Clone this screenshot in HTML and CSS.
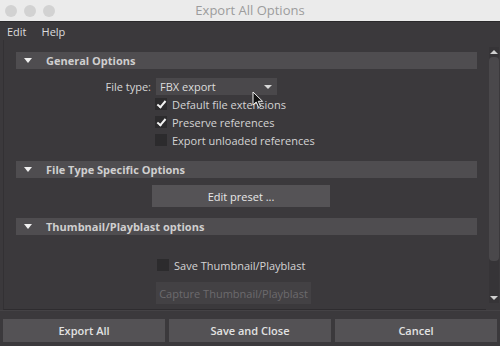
FILE: index.html
```html
<!DOCTYPE html>
<html>
	<head>
		<meta charset="UTF-8">
		<title>Export All Options</title>
		<link rel="stylesheet" href="styles.css">
	</head>
	<body>
		<div class="window">
			<div class="titlebar">
				<div class="lights"><span></span><span></span><span></span></div>
				<div class="title">Export All Options</div>
			</div>
			<div class="menubar">
				<span>Edit</span>
				<span>Help</span>
			</div>
			<div class="main">
				<div class="panel">
					<div class="section">
						<div class="head"><i class="tri"></i>General Options</div>
						<div class="body general">
							<div class="row">
								<label class="lbl">File type:</label>
								<div class="select">FBX export<i class="arrow"></i></div>
							</div>
							<div class="check"><span class="box on"></span>Default file extensions</div>
							<div class="check"><span class="box on"></span>Preserve references</div>
							<div class="check"><span class="box"></span>Export unloaded references</div>
						</div>
					</div>
					<div class="section">
						<div class="head"><i class="tri"></i>File Type Specific Options</div>
						<div class="body specific">
							<button class="btn preset">Edit preset ...</button>
						</div>
					</div>
					<div class="section">
						<div class="head"><i class="tri"></i>Thumbnail/Playblast options</div>
						<div class="body thumb">
							<div class="check"><span class="box"></span>Save Thumbnail/Playblast</div>
							<button class="btn capture" disabled>Capture Thumbnail/Playblast</button>
						</div>
					</div>
				</div>
				<div class="scroll">
					<i class="up"></i>
					<div class="track"><div class="thumbbar"></div></div>
					<i class="down"></i>
				</div>
			</div>
			<div class="footer">
				<button class="fbtn">Export All</button>
				<button class="fbtn">Save and Close</button>
				<button class="fbtn">Cancel</button>
			</div>
			<svg class="cursor" width="12" height="18" viewBox="0 0 12 18">
				<path d="M1 1 L1 14 L4.2 11 L6.6 16.5 L8.6 15.6 L6.3 10.3 L10.6 10.3 Z" fill="#111" stroke="#eee" stroke-width="1"/>
			</svg>
		</div>
	</body>
</html>
```
FILE: styles.css
```css
body {
	margin: 0;
	background: #3b393c;
	font-family: "Open Sans", "DejaVu Sans", sans-serif;
	font-size: 11px;
	color: #d6d6d6;
}

.window {
	width: 500px;
	height: 346px;
	position: relative;
	overflow: hidden;
	display: flex;
	flex-direction: column;
}

.titlebar {
	height: 21px;
	background: #ebebeb;
	border-bottom: 1px solid #2a292b;
	display: flex;
	align-items: center;
	position: relative;
	flex-shrink: 0;
}

.lights {
	display: flex;
	gap: 7px;
	padding-left: 5px;
}

.lights span {
	width: 12px;
	height: 12px;
	border-radius: 50%;
	background: #d2d2d2;
}

.title {
	position: absolute;
	left: 0;
	right: 0;
	text-align: center;
	color: #9c9c9c;
	font-size: 13px;
	line-height: 21px;
}

.menubar {
	height: 18px;
	display: flex;
	gap: 15px;
	padding-left: 7px;
	align-items: center;
	color: #dcdcdc;
	flex-shrink: 0;
}

.main {
	display: flex;
	height: 270px;
	flex-shrink: 0;
}

.panel {
	flex: 1;
	margin-left: 3px;
	border-left: 1px solid #333134;
	border-bottom: 1px solid #2e2c2f;
	padding: 12px 9px 0 12px;
}

.head {
	height: 17px;
	background: #4f4d50;
	font-weight: bold;
	color: #cfcfcf;
	display: flex;
	align-items: center;
	padding-left: 8px;
}

.tri {
	width: 0;
	height: 0;
	border-left: 4px solid transparent;
	border-right: 4px solid transparent;
	border-top: 5px solid #f0f0f0;
	margin-right: 14px;
}

.body.general {
	padding: 8px 0 12px;
}

.row {
	display: flex;
	align-items: center;
	height: 18px;
}

.lbl {
	width: 135px;
	text-align: right;
	padding-right: 5px;
}

.select {
	width: 121px;
	height: 17px;
	background: #4a484b;
	display: flex;
	align-items: center;
	padding-left: 4px;
	box-sizing: border-box;
	color: #dedede;
	position: relative;
}

.arrow {
	position: absolute;
	right: 5px;
	top: 7px;
	border-left: 4px solid transparent;
	border-right: 4px solid transparent;
	border-top: 4px solid #d8d8d8;
}

.check {
	display: flex;
	align-items: center;
	height: 18px;
	padding-left: 139px;
	color: #d4d4d4;
}

.box {
	width: 12px;
	height: 12px;
	background: #2c2b2d;
	margin-right: 5px;
	position: relative;
	flex-shrink: 0;
}

.box.on::after {
	content: "";
	position: absolute;
	left: 4px;
	top: 1px;
	width: 3px;
	height: 7px;
	border-right: 2px solid #f2f2f2;
	border-bottom: 2px solid #f2f2f2;
	transform: rotate(40deg);
}

.btn {
	display: block;
	border: none;
	font-family: inherit;
	font-size: 11px;
	padding: 0;
}

.body.specific {
	padding: 7px 0 11px 136px;
}

.preset {
	width: 178px;
	height: 22px;
	background: #555356;
	color: #e8e8e8;
}

.body.thumb {
	padding: 21px 0 0;
}

.body.thumb .check {
	padding-left: 141px;
}

.capture {
	margin: 8px 0 0 140px;
	width: 155px;
	height: 22px;
	background: #434144;
	color: #6c6a6d;
}

.scroll {
	width: 10px;
	margin: 7px 1px 0 3px;
	display: flex;
	flex-direction: column;
	align-items: center;
	height: 256px;
	background: #363437;
}

.up, .down {
	width: 0;
	height: 0;
	border-left: 4px solid transparent;
	border-right: 4px solid transparent;
	margin: 3px 0;
}

.up {
	border-bottom: 4px solid #d0d0d0;
}

.down {
	border-top: 4px solid #d0d0d0;
}

.track {
	flex: 1;
	width: 100%;
}

.thumbbar {
	height: 204px;
	background: #4a484b;
	border-radius: 4px;
}

.footer {
	flex: 1;
	display: flex;
	gap: 4px;
	padding: 8px 3px 4px;
	border-top: 1px solid #444245;
}

.fbtn {
	flex: 1;
	border: none;
	background: #545255;
	color: #e2e2e2;
	font-family: inherit;
	font-size: 11px;
	font-weight: 600;
}

.cursor {
	position: absolute;
	left: 252px;
	top: 91px;
}
```
